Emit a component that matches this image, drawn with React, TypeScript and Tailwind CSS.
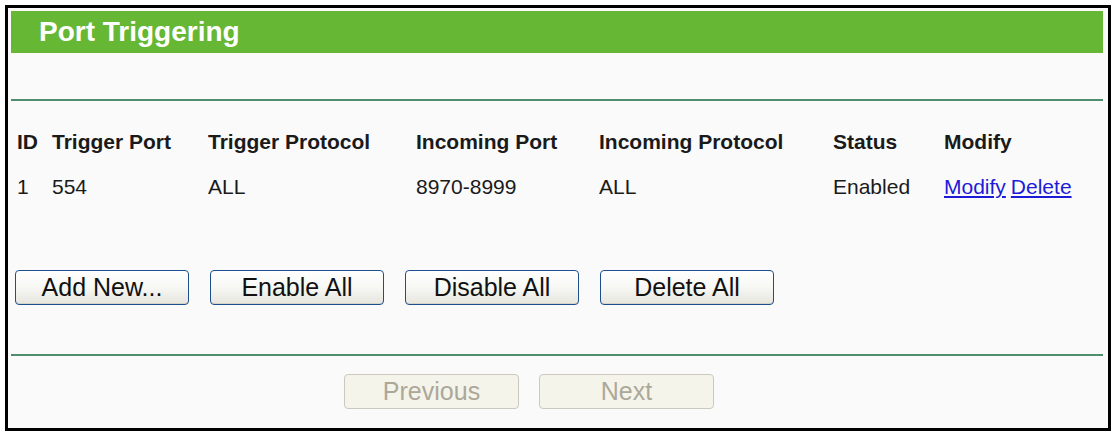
const rows = [
  {
    id: '1',
    triggerPort: '554',
    triggerProtocol: 'ALL',
    incomingPort: '8970-8999',
    incomingProtocol: 'ALL',
    status: 'Enabled',
  },
]

const cols = 'grid grid-cols-[35px_156px_208px_183px_234px_111px_1fr]'

function XpButton({ label }: { label: string }): JSX.Element {
  return (
    <button className="w-[174px] h-[35px] rounded-[4px] border border-[#1d4f8c] bg-linear-to-b from-white via-[#f7f7f4] to-[#e6e5de] text-[25px] leading-none text-[#111] shadow-[inset_0_-1px_0_#d6d4c8]">
      {label}
    </button>
  )
}

function DisabledButton({ label }: { label: string }): JSX.Element {
  return (
    <button
      disabled
      className="w-[175px] h-[35px] rounded-[4px] border border-[#cbc9bd] bg-[#f5f4eb] text-[25px] leading-none text-[#aca899]"
    >
      {label}
    </button>
  )
}

export default function App(): JSX.Element {
  return (
    <div className="w-[1115px] h-[434px] bg-white pt-[5px] pl-[5px] font-['Liberation_Sans',Arial,sans-serif]">
      <div className="w-[1106px] h-[426px] border-[3px] border-black bg-[#fafafa] pt-[3px] pl-[3px] pr-[5px] flex flex-col">
        {/* Title bar */}
        <div className="h-[42px] shrink-0 bg-[#66b733] pl-[28px] flex items-center text-white font-bold text-[28px] leading-none">
          Port Triggering
        </div>

        <div className="h-[46px] shrink-0" />
        <div className="h-[2px] shrink-0 bg-[#4e8e6e]" />

        {/* Table */}
        <div className="ml-[6px] mt-[29px] text-[21px] leading-[24px] text-[#1a1a1a]">
          <div className={`${cols} font-bold`}>
            <span>ID</span>
            <span>Trigger Port</span>
            <span>Trigger Protocol</span>
            <span>Incoming Port</span>
            <span>Incoming Protocol</span>
            <span>Status</span>
            <span>Modify</span>
          </div>
          {rows.map((r) => (
            <div key={r.id} className={`${cols} mt-[21px]`}>
              <span>{r.id}</span>
              <span>{r.triggerPort}</span>
              <span>{r.triggerProtocol}</span>
              <span>{r.incomingPort}</span>
              <span>{r.incomingProtocol}</span>
              <span>{r.status}</span>
              <span className="flex gap-[5px]">
                <a href="#" className="text-[#1c1cd6] underline">Modify</a>
                <a href="#" className="text-[#1c1cd6] underline">Delete</a>
              </span>
            </div>
          ))}
        </div>

        {/* Actions */}
        <div className="ml-[4px] mt-[71px] flex gap-[21px]">
          <XpButton label="Add New..." />
          <XpButton label="Enable All" />
          <XpButton label="Disable All" />
          <XpButton label="Delete All" />
        </div>

        <div className="mt-[49px] h-[2px] shrink-0 bg-[#4e8e6e]" />

        {/* Paging */}
        <div className="ml-[333px] mt-[18px] flex gap-[20px]">
          <DisabledButton label="Previous" />
          <DisabledButton label="Next" />
        </div>
      </div>
    </div>
  )
}
